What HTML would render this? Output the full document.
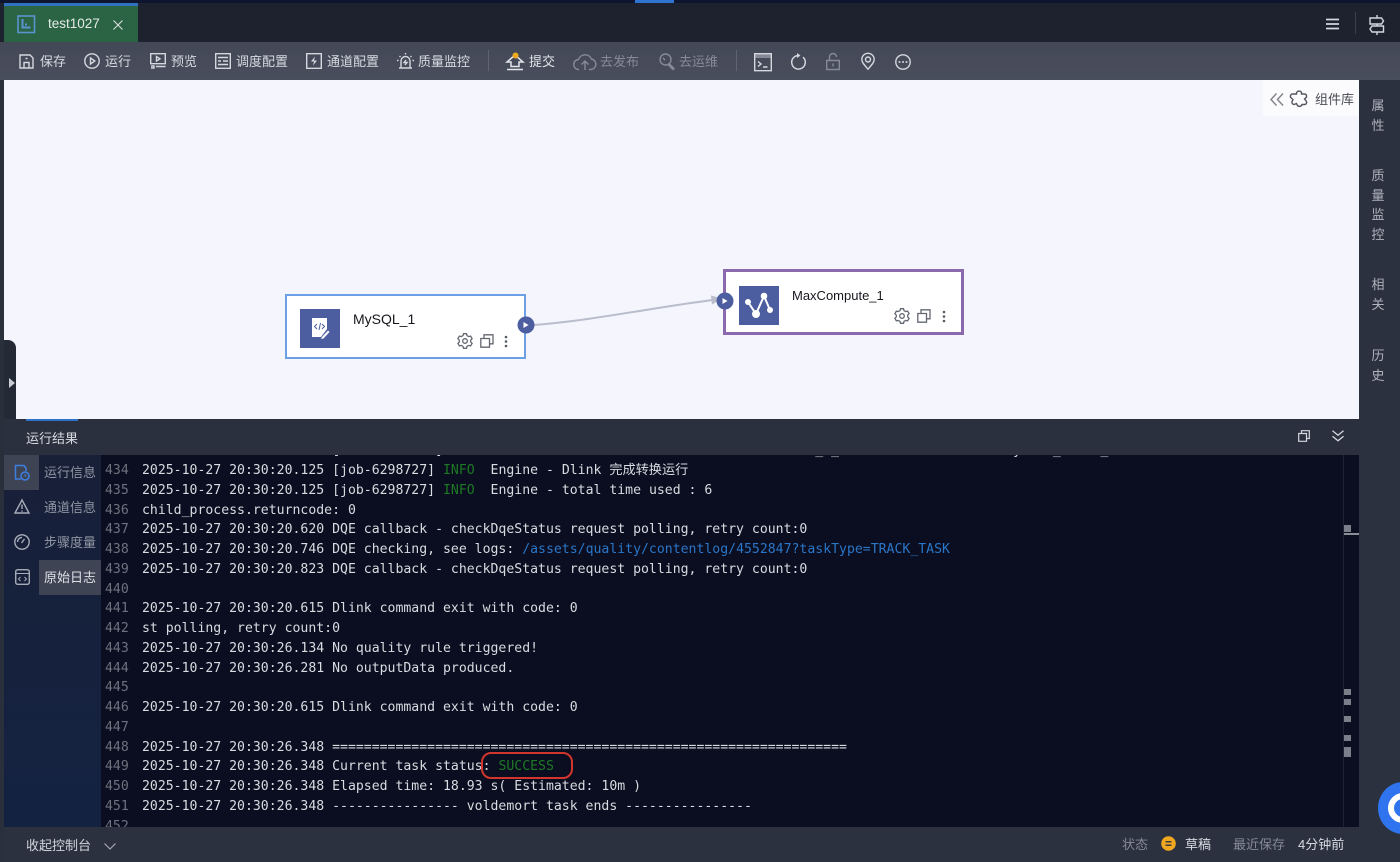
<!DOCTYPE html>
<html lang="zh"><head><meta charset="utf-8"><title>test1027</title>
<style>
*{box-sizing:border-box}
html,body{margin:0;padding:0}
body{width:1400px;height:862px;position:relative;overflow:hidden;background:#2c3140;font-family:"Liberation Sans","Noto Sans CJK SC",sans-serif;color:#d5d8e0}
.a{position:absolute}
.t{position:absolute;font-size:13px;line-height:18px;white-space:nowrap;color:#d6d9e0}
.d{color:#858a96}
svg{position:absolute;overflow:visible;fill:none;stroke:#d4d7de;stroke-width:1.4}
#log{position:absolute;left:101px;top:455px;width:1243px;height:372px;background:#0a0e20;overflow:hidden}
#log div{position:absolute;left:0;height:20px;font:13.17px/20px "DejaVu Sans Mono","Liberation Mono",monospace;color:#d8dbe0;white-space:pre}
#log b{position:absolute;left:4px;font-weight:400;color:#6d727e}
#log span.c{position:absolute;left:41px}
#log i{font-style:normal}
.g{color:#1d7a24}.l{color:#2a76c8}
.v{position:absolute;left:1370px;width:16px;font-size:13px;line-height:19.5px;color:#aeb2bc;text-align:center}
.n{position:absolute;left:44px;font-size:13px;line-height:18px;color:#8f95a3;white-space:nowrap}
.m{position:absolute;background:#7c7f89;left:1344px;width:7px}
</style></head><body>
<div class="a" style="left:0;top:0;width:1400px;height:3px;background:#0d1530"></div>
<div class="a" style="left:635px;top:0;width:39px;height:3px;background:#2f73d0"></div>
<div class="a" style="left:0;top:3px;width:1400px;height:39px;background:#1e222e"></div>
<div class="a" style="left:4px;top:3px;width:134px;height:40px;background:#2a6445;border-top:3px solid #2f73c0"></div>
<svg style="left:17px;top:15px" width="19" height="19" viewBox="0 0 19 19"><rect x="1" y="1" width="16.5" height="16.5" stroke="#5b93cf" stroke-width="1.6"/><path d="M5.500 4v8.500h8M9 8.500v2" stroke="#5b93cf" stroke-width="2"/></svg>
<div class="t" style="left:48px;top:15px;font-size:13.5px;color:#e6eae6">test1027</div>
<svg style="left:113px;top:20px" width="10" height="10" viewBox="0 0 10 10"><path d="M.5.500l9 9M9.500.500l-9 9" stroke="#dfe3e2" stroke-width="1"/></svg>
<svg style="left:1326px;top:18px" width="13" height="12" viewBox="0 0 13 12"><path d="M0 1.500h13M0 6h13M0 10.500h13" stroke-width="1.700"/></svg>
<div class="a" style="left:1355px;top:12px;width:1px;height:22px;background:#3a3f4c"></div>
<svg style="left:1369px;top:15px" width="16" height="20" viewBox="0 0 16 20"><path d="M8 0v3M8 9v2M8 17v3M1 3h11.500l2 3-2 3H1zM14.500 11H3L1 14l2 3h11.500z" stroke-width="1.400"/></svg>

<div class="a" style="left:0;top:42px;width:1400px;height:38px;background:linear-gradient(#434857,#494e5d)"></div>
<svg style="left:19px;top:54px" width="15" height="15" viewBox="0 0 15 15"><path d="M1 1h10l3 3v10H1zM5 14V8.500h5V14M6.500 4.500h2"/></svg>
<div class="t" style="left:40px;top:53px">保存</div>
<svg style="left:84px;top:53px" width="16" height="16" viewBox="0 0 16 16"><circle cx="8" cy="8" r="7.200"/><path d="M6.500 5v6l4.300-3z"/></svg>
<div class="t" style="left:105px;top:53px">运行</div>
<svg style="left:150px;top:53px" width="16" height="16" viewBox="0 0 16 16"><path d="M.7.700h14.600v10H.7zM6.500 3.500v4.500l3.500-2.200zM1 13h3v2H1M6 13.500h9.500"/></svg>
<div class="t" style="left:171px;top:53px">预览</div>
<svg style="left:215px;top:53px" width="16" height="16" viewBox="0 0 16 16"><path d="M.7.700h14.600v14.600H.7zM3 4.500h10M3 8h3M8 8h5M3 11.500h10"/></svg>
<div class="t" style="left:236px;top:53px">调度配置</div>
<svg style="left:306px;top:53px" width="16" height="16" viewBox="0 0 16 16"><path d="M.7.700h14.600v14.600H.7z"/><path d="M9 3.500L5 8.500h3l-1 4 4-5H8z" fill="#d4d7de" stroke="none"/></svg>
<div class="t" style="left:327px;top:53px">通道配置</div>
<svg style="left:397px;top:53px" width="17" height="16" viewBox="0 0 17 16"><path d="M4 15V8a4.500 4.500 0 0 1 9 0v7zM2 15h13M8.500 0v1.500M2.500 3l1 1M14.500 3l-1 1M0 7.500h1.500M15.500 7.500H17M9 7l-2 2.500h3L8 12"/></svg>
<div class="t" style="left:418px;top:53px">质量监控</div>
<div class="a" style="left:488px;top:50px;width:1px;height:21px;background:#5f6472"></div>
<svg style="left:506px;top:52px" width="18" height="19" viewBox="0 0 18 19"><path d="M9 3L1 10h4v4.500h8V10h4zM1 17.500h16" stroke="#e4e6ea" stroke-width="1.500"/><circle cx="9.500" cy="3.500" r="3" fill="#efab1e" stroke="none"/></svg>
<div class="t" style="left:529px;top:53px;color:#e3e5ea">提交</div>
<svg style="left:573px;top:52px" width="24" height="19" viewBox="0 0 24 19"><path d="M6 17.500a5 5 0 0 1-.5-10A7 7 0 0 1 18.500 7a5.300 5.300 0 0 1-.5 10.500h-2M12 18V9.500M8.500 12.500L12 9l3.500 3.500" stroke="#868b98"/></svg>
<div class="t" style="left:600px;top:53px;color:#868b98">去发布</div>
<svg style="left:659px;top:53px" width="16" height="17" viewBox="0 0 16 17"><path d="M6.500 1a5.500 5.500 0 1 0 .1 11A5.500 5.500 0 0 0 6.500 1zM10 10.500l5 5-1 1-5-5M4 5l2 2" stroke="#868b98"/></svg>
<div class="t" style="left:679px;top:53px;color:#868b98">去运维</div>
<div class="a" style="left:736px;top:50px;width:1px;height:21px;background:#5f6472"></div>
<svg style="left:754px;top:53px" width="18" height="19" viewBox="0 0 18 19"><path d="M.7.700h16.600v17H.7z"/><path d="M1 1h16v4H1z" fill="#d4d7de" fill-opacity=".45" stroke="none"/><path d="M4 8.500l3 2.500-3 2.500M9 14h4.500"/></svg>
<svg style="left:790px;top:53px" width="16" height="17" viewBox="0 0 16 17"><path d="M8.500 2.500a6.800 6.800 0 1 0 4.500 1.700" stroke-width="1.500"/><path d="M7 0l3.500 2.500L7 5z" fill="#d4d7de" stroke="none"/></svg>
<svg style="left:826px;top:53px" width="14" height="17" viewBox="0 0 14 17"><path d="M.7 7.500h12.600v9H.7zM3.500 7.500V4a3.500 3.500 0 0 1 7 0M7 10.500v3" stroke="#858a97"/></svg>
<svg style="left:861px;top:53px" width="14" height="17" viewBox="0 0 14 17"><path d="M7 16.200C3 11.500.8 9.200.8 6.500a6.200 6.200 0 0 1 12.400 0c0 2.700-2.200 5-6.200 9.700z"/><circle cx="7" cy="6.500" r="2.500"/></svg>
<svg style="left:895px;top:54px" width="16" height="16" viewBox="0 0 16 16"><circle cx="8" cy="8" r="7.200"/><circle cx="4.500" cy="8" r="1" fill="#d4d7de" stroke="none"/><circle cx="8" cy="8" r="1" fill="#d4d7de" stroke="none"/><circle cx="11.500" cy="8" r="1" fill="#d4d7de" stroke="none"/></svg>

<div class="a" style="left:4px;top:80px;width:1355px;height:339px;background:#f4f5fd"></div>
<div class="a" style="left:1263px;top:80px;width:96px;height:36px;background:#fbfbfe"></div>
<svg style="left:1270px;top:93px" width="14" height="13" viewBox="0 0 14 13"><path d="M6.500.5L1 6.500l5.500 6M13 .5l-5.500 6 5.500 6" stroke="#85868c" stroke-width="1.500"/></svg>
<svg style="left:1290px;top:89px" width="18" height="18" viewBox="0 0 18 18"><path d="M6.500 4a2.700 2.700 0 0 1 5-.5V5h3a2.200 2.200 0 0 1 1.500 3.700L14.500 10l1.700 2a2.200 2.200 0 0 1-1.700 3.500h-2.500a2.600 2.600 0 0 1-4.800.5l-.7-1.500-2.500 1A2.300 2.300 0 0 1 2 12.500L3 10.500 1.200 9A2.300 2.300 0 0 1 3 5h3.500z" stroke="#55575e" stroke-width="1.400"/></svg>
<div class="t" style="left:1315px;top:91px;color:#4a4c52">组件库</div>

<div class="a" style="left:285px;top:294px;width:241px;height:65px;background:#fff;border:2.500px solid #6d9fe4"></div>
<div class="a" style="left:300px;top:309px;width:40px;height:39px;background:#4c5e9f"></div>
<svg style="left:311px;top:318px" width="19" height="22" viewBox="0 0 19 22"><path d="M1 0h15v11l-6 8H1z" fill="#fff" stroke="none"/><path d="M6 6L3.500 8.500 6 11M11 6l2.500 2.500L11 11M9.500 5l-1.500 7" stroke="#4c5e9f" stroke-width="1"/><path d="M11 19l6-6.500 1.500 1.500-6 6.500-2.500.5z" fill="#fff" stroke="none"/></svg>
<div class="t" style="left:353px;top:310px;color:#16181d;font-size:14px">MySQL_1</div>
<svg style="left:458px;top:334px" width="14" height="14" viewBox="0 1 14 14"><path d="M5.500.7h3l.5 1.900 1.700 1 1.900-.5 1.500 2.600-1.400 1.400v1.800l1.400 1.400-1.500 2.600-1.900-.5-1.700 1-.5 1.900h-3l-.5-1.900-1.700-1-1.900.5L-.1 10.300l1.400-1.400V7.100L-.1 5.700l1.500-2.600 1.900.5 1.700-1z" stroke="#636770" stroke-width="1.300"/><circle cx="7" cy="8" r="2.300" stroke="#636770" stroke-width="1.300"/></svg>
<svg style="left:480px;top:334px" width="14" height="14" viewBox="0 0 14 14"><path d="M4 4V.8h9v9H9.500M.8 4.500h8.700v8.700H.8z" stroke="#636770" stroke-width="1.300"/></svg>
<svg style="left:504px;top:335px" width="4" height="13" viewBox="0 0 4 13"><circle cx="2" cy="2" r="1.300" fill="#555a64" stroke="none"/><circle cx="2" cy="6.500" r="1.300" fill="#555a64" stroke="none"/><circle cx="2" cy="11" r="1.300" fill="#555a64" stroke="none"/></svg>
<div class="a" style="left:723px;top:269px;width:241px;height:66px;background:#fff;border:3px solid #8b69ae"></div>
<div class="a" style="left:739px;top:286px;width:40px;height:39px;background:#4c5e9f"></div>
<svg style="left:746px;top:291px" width="28" height="30" viewBox="0 0 28 30"><path d="M2 11l8 12 8-18 6 14" stroke="#fff" stroke-width="2"/><circle cx="2" cy="11" r="3" fill="#fff" stroke="none"/><circle cx="10" cy="23" r="4" fill="#fff" stroke="none"/><circle cx="18" cy="5" r="3.300" fill="#fff" stroke="none"/><circle cx="24" cy="19" r="3" fill="#fff" stroke="none"/></svg>
<div class="t" style="left:792px;top:287px;color:#16181d;font-size:13px">MaxCompute_1</div>
<svg style="left:895px;top:309px" width="14" height="14" viewBox="0 1 14 14"><path d="M5.500.7h3l.5 1.900 1.700 1 1.900-.5 1.500 2.600-1.400 1.400v1.800l1.400 1.400-1.500 2.600-1.900-.5-1.700 1-.5 1.900h-3l-.5-1.900-1.700-1-1.900.5L-.1 10.300l1.400-1.400V7.100L-.1 5.700l1.500-2.600 1.900.5 1.700-1z" stroke="#636770" stroke-width="1.300"/><circle cx="7" cy="8" r="2.300" stroke="#636770" stroke-width="1.300"/></svg>
<svg style="left:917px;top:309px" width="14" height="14" viewBox="0 0 14 14"><path d="M4 4V.8h9v9H9.500M.8 4.500h8.700v8.700H.8z" stroke="#636770" stroke-width="1.300"/></svg>
<svg style="left:942px;top:310px" width="4" height="13" viewBox="0 0 4 13"><circle cx="2" cy="2" r="1.300" fill="#555a64" stroke="none"/><circle cx="2" cy="6.500" r="1.300" fill="#555a64" stroke="none"/><circle cx="2" cy="11" r="1.300" fill="#555a64" stroke="none"/></svg>
<svg style="left:526px;top:295px" width="200" height="35" viewBox="0 0 200 35"><path d="M8 30C70 25 130 12 187 5" stroke="#b9bdcc" stroke-width="2"/><path d="M196 3.500l-11-3 1 9z" fill="#b9bdcc" stroke="none"/></svg>
<svg style="left:517px;top:316px" width="18" height="18" viewBox="0 0 18 18"><circle cx="9" cy="9" r="8.500" fill="#4c5e9f" stroke="none"/><path d="M6.500 6v6l5-3z" fill="#fff" stroke="none"/></svg>
<svg style="left:716px;top:292px" width="18" height="18" viewBox="0 0 18 18"><circle cx="9" cy="9" r="8.500" fill="#4c5e9f" stroke="none"/><path d="M6.500 6v6l5-3z" fill="#fff" stroke="none"/></svg>

<div class="a" style="left:4px;top:340px;width:12px;height:88px;background:#242936;border-radius:0 8px 8px 0"></div>
<svg style="left:9px;top:378px" width="6" height="10" viewBox="0 0 6 10"><path d="M0 0l6 5-6 5z" fill="#c9ccd3" stroke="none"/></svg>
<div class="a" style="left:0;top:80px;width:4px;height:782px;background:#2a2f3c"></div>

<div class="v" style="top:96px">属<br>性</div>
<div class="v" style="top:166px">质<br>量<br>监<br>控</div>
<div class="v" style="top:275px">相<br>关</div>
<div class="v" style="top:346px">历<br>史</div>

<div class="a" style="left:4px;top:419px;width:1355px;height:36px;background:#2b303e"></div>
<div class="a" style="left:26px;top:419px;width:52px;height:2px;background:#2f73c8"></div>
<div class="t" style="left:26px;top:430px;color:#d8dbe2">运行结果</div>
<svg style="left:1298px;top:430px" width="12" height="12" viewBox="0 0 12 12"><path d="M3.500 3.500V.7h7.800v7.800H8.500M.7 3.500h7.800v7.800H.7z" stroke-width="1.200"/></svg>
<svg style="left:1332px;top:430px" width="12" height="12" viewBox="0 0 12 12"><path d="M.5.800L6 5.300 11.500.8M.5 6.300L6 10.800l5.500-4.500" stroke-width="1.300"/></svg>

<div class="a" style="left:4px;top:455px;width:97px;height:372px;background:linear-gradient(#182038,#142242)"></div>
<div class="a" style="left:4px;top:455px;width:35px;height:35px;background:#3e4454"></div>
<div class="a" style="left:39px;top:560px;width:62px;height:35px;background:#3e4454"></div>
<svg style="left:14px;top:464px" width="16" height="17" viewBox="0 0 16 17"><path d="M7 15H1.500V1.500h8.500l2 2.500v3" stroke="#3f7fe0" stroke-width="1.500"/><circle cx="11" cy="12" r="4" stroke="#3f7fe0" stroke-width="1.500"/><path d="M11 10v2h1.500" stroke="#3f7fe0" stroke-width="1"/></svg>
<svg style="left:14px;top:499px" width="16" height="15" viewBox="0 0 16 15"><path d="M8 1l7 13H1zM8 5.500v4.500M8 11.500v1.200" stroke="#a7acb8"/></svg>
<svg style="left:14px;top:534px" width="16" height="16" viewBox="0 0 16 16"><circle cx="8" cy="8" r="7.200" stroke="#a7acb8"/><path d="M3.500 8A4.500 4.500 0 0 1 8 3.500M7.500 9l3-4" stroke="#a7acb8"/></svg>
<svg style="left:15px;top:569px" width="15" height="16" viewBox="0 0 15 16"><rect x=".7" y=".7" width="13.600" height="14.600" rx="2" stroke="#a7acb8"/><path d="M1 4.500h13M5.500 8L3.500 10l2 2M9.500 8l2 2-2 2" stroke="#a7acb8" stroke-width="1"/></svg>
<div class="n" style="top:464px">运行信息</div>
<div class="n" style="top:499px">通道信息</div>
<div class="n" style="top:534px">步骤度量</div>
<div class="n" style="top:569px;color:#dde0e6">原始日志</div>

<div id="log">
<div style="top:-14px"><span class="c">                        [            ]                                               _ _                      y    _     _</span></div>
<div style="top:6px"><b>434</b><span class="c">2025-10-27 20:30:20.125 [job-6298727] <i class="g">INFO</i>  Engine - Dlink 完成转换运行</span></div>
<div style="top:26px"><b>435</b><span class="c">2025-10-27 20:30:20.125 [job-6298727] <i class="g">INFO</i>  Engine - total time used : 6</span></div>
<div style="top:46px"><b>436</b><span class="c">child_process.returncode: 0</span></div>
<div style="top:65px"><b>437</b><span class="c">2025-10-27 20:30:20.620 DQE callback - checkDqeStatus request polling, retry count:0</span></div>
<div style="top:85px"><b>438</b><span class="c">2025-10-27 20:30:20.746 DQE checking, see logs: <i class="l">/assets/quality/contentlog/4552847?taskType=TRACK_TASK</i></span></div>
<div style="top:105px"><b>439</b><span class="c">2025-10-27 20:30:20.823 DQE callback - checkDqeStatus request polling, retry count:0</span></div>
<div style="top:125px"><b>440</b></div>
<div style="top:144px"><b>441</b><span class="c">2025-10-27 20:30:20.615 Dlink command exit with code: 0</span></div>
<div style="top:164px"><b>442</b><span class="c">st polling, retry count:0</span></div>
<div style="top:184px"><b>443</b><span class="c">2025-10-27 20:30:26.134 No quality rule triggered!</span></div>
<div style="top:204px"><b>444</b><span class="c">2025-10-27 20:30:26.281 No outputData produced.</span></div>
<div style="top:223px"><b>445</b></div>
<div style="top:243px"><b>446</b><span class="c">2025-10-27 20:30:20.615 Dlink command exit with code: 0</span></div>
<div style="top:263px"><b>447</b></div>
<div style="top:283px"><b>448</b><span class="c">2025-10-27 20:30:26.348 =================================================================</span></div>
<div style="top:302px"><b>449</b><span class="c">2025-10-27 20:30:26.348 Current task status: <i class="g">SUCCESS</i></span></div>
<div style="top:322px"><b>450</b><span class="c">2025-10-27 20:30:26.348 Elapsed time: 18.93 s( Estimated: 10m )</span></div>
<div style="top:342px"><b>451</b><span class="c">2025-10-27 20:30:26.348 ---------------- voldemort task ends ----------------</span></div>
<div style="top:362px"><b>452</b></div>
</div>
<div class="a" style="left:481px;top:752px;width:92px;height:27px;border:2px solid #d1352c;border-radius:10px"></div>
<div class="a" style="left:1343px;top:455px;width:1px;height:372px;background:#1e2333"></div>
<div class="a" style="left:1344px;top:455px;width:15px;height:372px;background:#0a0e20"></div>
<div class="m" style="top:525px;height:7px"></div>
<div class="a" style="left:1344px;top:533px;width:15px;height:2px;background:#8b8e97"></div>
<div class="m" style="top:689px;height:6px"></div>
<div class="m" style="top:699px;height:6px"></div>
<div class="m" style="top:716px;height:6px"></div>
<div class="m" style="top:735px;height:6px"></div>
<div class="m" style="top:747px;height:10px"></div>

<div class="a" style="left:4px;top:827px;width:1355px;height:35px;background:#2c3140"></div>
<div class="t" style="left:26px;top:837px;color:#d0d3da">收起控制台</div>
<svg style="left:104px;top:843px" width="12" height="7" viewBox="0 0 12 7"><path d="M.5.500L6 6l5.500-5.500" stroke="#a2a6b0" stroke-width="1.200"/></svg>
<div class="t d" style="left:1122px;top:836px">状态</div>
<svg style="left:1161px;top:836px" width="15" height="15" viewBox="0 0 15 15"><circle cx="7.500" cy="7.500" r="7.300" fill="#f0a71f" stroke="none"/><path d="M4.500 5.800h6M4.500 9.200h6" stroke="#2c3140" stroke-width="1.300"/></svg>
<div class="t" style="left:1185px;top:836px">草稿</div>
<div class="t d" style="left:1233px;top:836px">最近保存</div>
<div class="t" style="left:1298px;top:836px">4分钟前</div>

<div class="a" style="left:1378px;top:782px;width:50px;height:52px;border-radius:50%;background:#2f74ee"></div>
<div class="a" style="left:1388px;top:793px;width:30px;height:30px;border-radius:50%;border:6px solid #fff"></div>
</body></html>
